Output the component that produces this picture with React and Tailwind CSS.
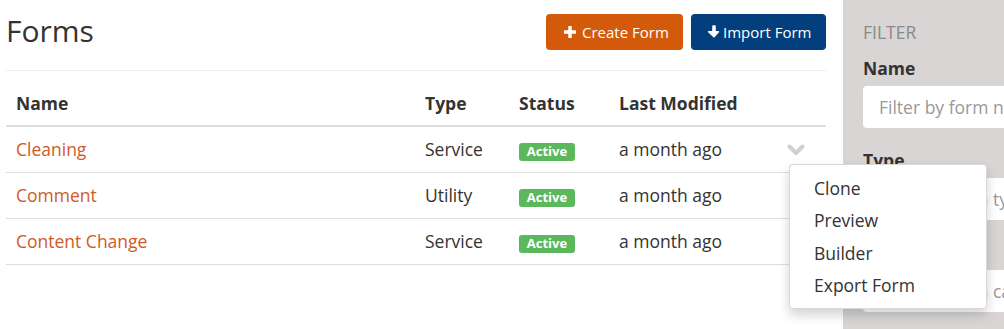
import React from "react";

const rows = [
  { name: "Cleaning", type: "Service" },
  { name: "Comment", type: "Utility" },
  { name: "Content Change", type: "Service" },
];

function Plus() {
  return (
    <svg width="12" height="12" viewBox="0 0 12 12" className="shrink-0">
      <path d="M4.3 0h3.4v4.3H12v3.4H7.7V12H4.3V7.7H0V4.3h4.3z" fill="#fff" />
    </svg>
  );
}

function ArrowDown() {
  return (
    <svg width="14" height="14" viewBox="0 0 14 14" className="shrink-0">
      <path
        d="M5.2 1.2a1 1 0 0 1 1-1h1.6a1 1 0 0 1 1 1V6h2.6a.8.8 0 0 1 .56 1.36L7.56 12.2a.8.8 0 0 1-1.12 0L1.04 7.36A.8.8 0 0 1 1.6 6h3.6z"
        fill="#fff"
      />
    </svg>
  );
}

function Chevron() {
  return (
    <svg width="18" height="12" viewBox="0 0 18 12">
      <polyline
        points="2.5,2.5 9,9 15.5,2.5"
        fill="none"
        stroke="#cfcfcf"
        strokeWidth="4"
        strokeLinecap="round"
        strokeLinejoin="round"
      />
    </svg>
  );
}

export default function App() {
  return (
    <div className="flex h-[329px] w-full overflow-hidden bg-white font-['Open_Sans',_'Liberation_Sans',_sans-serif] text-[#333]">
      <main className="relative z-10 w-[843px] shrink-0 pl-[6px] pr-[17px]">
        <div className="flex items-center justify-between border-b border-[#eee] pt-[14px] pb-[20px]">
          <h1 className="text-[30px] font-normal leading-[36px] text-[#333] -mt-[2px]">Forms</h1>
          <div className="flex gap-2">
            <button className="flex h-[36px] w-[137px] items-center gap-[6px] rounded-[4px] bg-[#d35a0b] pl-[18px] text-[15px] text-white">
              <Plus />
              <span>Create Form</span>
            </button>
            <button className="flex h-[36px] w-[135px] items-center gap-[2px] rounded-[4px] bg-[#033f7c] pl-[16px] text-[15px] text-white">
              <ArrowDown />
              <span>Import Form</span>
            </button>
          </div>
        </div>

        <table className="mt-[10px] w-full border-collapse text-[17.5px]">
          <thead>
            <tr className="h-[45px] border-b-2 border-[#ddd] text-left">
              <th className="w-[409px] pl-[10px] font-bold">Name</th>
              <th className="w-[94px] pl-[10px] font-bold">Type</th>
              <th className="w-[100px] pl-[10px] font-bold">Status</th>
              <th className="w-[170px] pl-[10px] font-bold">Last Modified</th>
              <th></th>
            </tr>
          </thead>
          <tbody>
            {rows.map((r, i) => (
              <tr key={r.name} className="h-[46px] border-b border-[#ddd]">
                <td className="pl-[10px] text-[#cf5a1f]">{r.name}</td>
                <td className="pl-[10px]">{r.type}</td>
                <td className="pl-[10px]">
                  <span className="inline-flex h-[18px] w-[56px] items-center justify-center rounded-[3px] bg-[#5cb85c] text-[13px] font-bold text-white">
                    Active
                  </span>
                </td>
                <td className="pl-[10px]">a month ago</td>
                <td className="pl-[8px]">
                  {i === 0 ? (
                    <div className="flex pt-[2px]">
                      <Chevron />
                    </div>
                  ) : null}
                </td>
              </tr>
            ))}
          </tbody>
        </table>

        <div className="absolute left-[789px] top-[164px] w-[198px] rounded-[4px] border border-[rgba(0,0,0,0.15)] bg-white py-[7px] text-[17.5px] shadow-[0_6px_12px_rgba(0,0,0,0.175)]">
          {["Clone", "Preview", "Builder", "Export Form"].map((t) => (
            <div key={t} className="flex h-[32.25px] items-center pl-[24px] text-[#333]">
              {t}
            </div>
          ))}
        </div>
      </main>

      <aside className="flex-1 bg-[#d8d5d4] pl-[20px] pt-[20px]">
        <div className="text-[17.5px] uppercase leading-[24px] text-[#8a8a8a]">Filter</div>
        <div className="mt-[12px] text-[17.5px] font-bold leading-[24px]">Name</div>
        <input
          className="mt-[6px] h-[42px] w-[260px] rounded-[4px] bg-white pl-[16px] text-[17.5px] outline-none placeholder:text-[#999]"
          placeholder="Filter by form name"
        />
        <div className="mt-[20px] text-[17.5px] font-bold leading-[24px]">Type</div>
        <input
          className="mt-[6px] h-[42px] w-[260px] rounded-[4px] bg-white pl-[16px] text-[17.5px] outline-none placeholder:text-[#999]"
          placeholder="Filter by form type"
        />
        <div className="mt-[20px] text-[17.5px] font-bold leading-[24px]">Category</div>
        <input
          className="mt-[6px] h-[42px] w-[260px] rounded-[4px] bg-white pl-[16px] text-[17.5px] outline-none placeholder:text-[#999]"
          placeholder="Filter by form category"
        />
      </aside>
    </div>
  );
}
